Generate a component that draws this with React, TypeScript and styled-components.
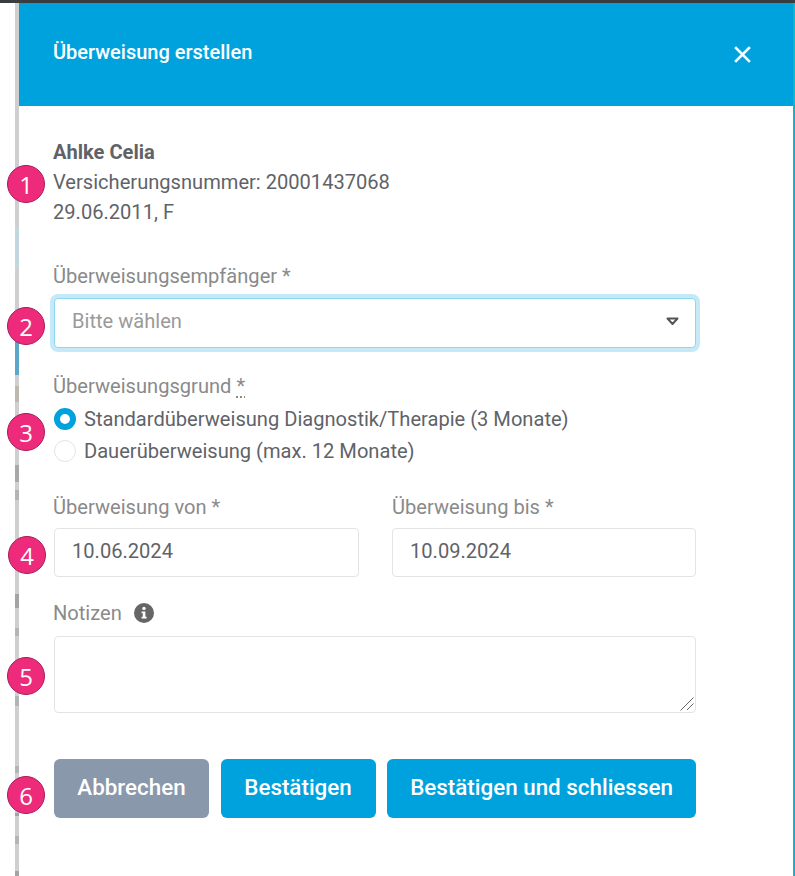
import React from 'react';
import styled, {createGlobalStyle} from 'styled-components';

const GlobalStyle = createGlobalStyle`
  html, body {
    margin: 0;
    padding: 0;
    background: #fff;
  }
  * {
    box-sizing: border-box;
  }
`;

const badges = [
    {label: '1', top: 165, left: 7},
    {label: '2', top: 307, left: 7},
    {label: '3', top: 413, left: 7},
    {label: '4', top: 536, left: 8},
    {label: '5', top: 657, left: 7},
    {label: '6', top: 776, left: 7},
];

// what shows of the page behind the panel
const GRAY = '#cfcfcf';
const MARK = '#b4b4b4';
const strips = [
    {height: 225, color: GRAY},
    {height: 40, color: '#c3d6e0'},
    {height: 62, color: GRAY},
    {height: 45, color: '#5ba6c9'},
    {height: 11, color: GRAY},
    {height: 16, color: '#bdb8ae'},
    {height: 63, color: GRAY},
    {height: 17, color: '#a8a8a8'},
    {height: 8, color: GRAY},
    {height: 10, color: MARK},
    {height: 94, color: GRAY},
    {height: 14, color: '#a4a4a4'},
    {height: 20, color: GRAY},
    {height: 8, color: MARK},
    {height: 60, color: GRAY},
    {height: 10, color: MARK},
    {height: 60, color: GRAY},
    {height: 7, color: MARK},
    {height: 40, color: GRAY},
    {height: 3, color: '#a4a4a4'},
    {height: 20, color: GRAY},
    {height: 8, color: MARK},
    {height: 27, color: GRAY},
    {height: 5, color: '#a4a4a4'},
];

function App() {
    return (
        <Page>
            <GlobalStyle/>
            <Gutter>
                {strips.map((strip, index) => (
                    <Strip key={index} $height={strip.height} $color={strip.color}/>
                ))}
            </Gutter>
            <Panel>
                <Header>
                    <Title>Überweisung erstellen</Title>
                    <CloseIcon viewBox="0 0 18 18" aria-label="Schliessen">
                        <path d="M2 2 L16 16 M16 2 L2 16" stroke="#fff" strokeWidth="2.6" fill="none"/>
                    </CloseIcon>
                </Header>
                <Body>
                    <Patient>
                        <PatientName>Ahlke Celia</PatientName>
                        <div>Versicherungsnummer: 20001437068</div>
                        <div>29.06.2011, F</div>
                    </Patient>

                    <RecipientLabel>Überweisungsempfänger *</RecipientLabel>
                    <SelectBox>
                        <Placeholder>Bitte wählen</Placeholder>
                        <svg width="13" height="9" viewBox="0 0 13 9">
                            <path d="M1.5 1.5 H11.5 L6.5 7 Z" fill="#fff" stroke="#555" strokeWidth="2" strokeLinejoin="round"/>
                        </svg>
                    </SelectBox>

                    <ReasonLabel>Überweisungsgrund <Required title="Pflichtfeld">*</Required></ReasonLabel>
                    <RadioGroup>
                        <RadioRow>
                            <Radio $checked/>
                            Standardüberweisung Diagnostik/Therapie (3 Monate)
                        </RadioRow>
                        <RadioRow>
                            <Radio/>
                            Dauerüberweisung (max. 12 Monate)
                        </RadioRow>
                    </RadioGroup>

                    <DateRow>
                        <div>
                            <DateLabel>Überweisung von *</DateLabel>
                            <Input type={'text'} defaultValue={'10.06.2024'}/>
                        </div>
                        <div>
                            <DateLabel $flush>Überweisung bis *</DateLabel>
                            <Input type={'text'} defaultValue={'10.09.2024'}/>
                        </div>
                    </DateRow>

                    <NotesLabel>
                        Notizen
                        <InfoIcon viewBox="0 0 20 20">
                            <circle cx="10" cy="10" r="10" fill="#666"/>
                            <circle cx="10" cy="5.4" r="1.7" fill="#fff"/>
                            <path d="M7.6 8.4 H11.4 V13.8 H12.6 V15.6 H7.6 V13.8 H8.8 V10.2 H7.6 Z" fill="#fff"/>
                        </InfoIcon>
                    </NotesLabel>
                    <NotesBox>
                        <Notes/>
                        <Grip viewBox="0 0 14 14">
                            <path d="M0.5 13.5 L13.5 0.5 M7 13 L13.5 6.5" stroke="#666" strokeWidth="1" fill="none"/>
                        </Grip>
                    </NotesBox>

                    <Buttons>
                        <Button $width={155} $color={'#8a98ab'}>Abbrechen</Button>
                        <Button $width={155}>Bestätigen</Button>
                        <Button $width={309}>Bestätigen und schliessen</Button>
                    </Buttons>
                </Body>
            </Panel>
            {badges.map((badge) => (
                <Badge key={badge.label} $top={badge.top} $left={badge.left}>{badge.label}</Badge>
            ))}
        </Page>
    )
}

const Page = styled.div`
  position: relative;
  display: flex;
  width: 795px;
  height: 876px;
  overflow: hidden;
  background: #fff;
  border-top: 3px solid #3a3d40;
  font-family: Roboto, "Liberation Sans", sans-serif;
  font-size: 20.1px;
  color: #5f6368;
`;
const Gutter = styled.div`
  flex: none;
  width: 19px;
  padding-left: 15px;
  background: #fff;
`;
const Strip = styled.div<{$height: number, $color: string}>`
  height: ${(p) => p.$height}px;
  background: ${(p) => p.$color};
`;
const Panel = styled.div`
  flex: 1;
  border-right: 2px solid #10b5c8;
`;
const Header = styled.div`
  display: flex;
  align-items: center;
  justify-content: space-between;
  height: 103px;
  padding: 0 41px 0 34px;
  background: #00a2de;
`;
const Title = styled.div`
  margin-bottom: 5px;
  color: #fff;
  font-size: 20px;
  font-weight: 500;
`;
const CloseIcon = styled.svg`
  width: 19px;
  height: 19px;
`;
const Body = styled.div`
  padding: 31px 0 0 35px;
  width: 677px;
`;
const Patient = styled.div`
  margin-left: -1px;
  line-height: 30px;
`;
const PatientName = styled.div`
  font-weight: 700;
`;
const Label = styled.div`
  height: 24px;
  margin-left: -1px;
  line-height: 24px;
  color: #8a8a8a;
`;
const RecipientLabel = styled(Label)`
  margin-top: 37px;
`;
const SelectBox = styled.div`
  display: flex;
  align-items: center;
  justify-content: space-between;
  height: 50px;
  margin-top: 10px;
  padding: 0 16px 4px 17px;
  background: #fff;
  border: 1px solid #8fd6f0;
  border-radius: 4px;
  box-shadow: 0 0 0 4px #c6e9f7;
`;
const Placeholder = styled.span`
  color: #9a9a9a;
`;
const ReasonLabel = styled(Label)`
  margin-top: 26px;
`;
const Required = styled.abbr`
  text-decoration: underline dotted;
  text-underline-offset: 3px;
`;
const RadioGroup = styled.div`
  margin-top: 5px;
`;
const RadioRow = styled.label`
  display: flex;
  align-items: center;
  gap: 8px;
  height: 32px;
`;
const Radio = styled.span<{$checked?: boolean}>`
  flex: none;
  width: 22px;
  height: 22px;
  border-radius: 50%;
  background: #fff;
  border: ${(p) => p.$checked ? '6px solid #00a2de' : '1px solid #e4e4e4'};
`;
const DateRow = styled.div`
  display: grid;
  grid-template-columns: 305px 304px;
  gap: 33px;
  margin-top: 28px;
`;
const DateLabel = styled(Label)<{$flush?: boolean}>`
  margin-left: ${(p) => p.$flush ? '0' : '-1px'};
  margin-bottom: 9px;
`;
const Input = styled.input`
  display: block;
  width: 100%;
  height: 49px;
  padding: 0 17px 4px;
  border: 1px solid #e4e4e4;
  border-radius: 4px;
  outline: none;
  background: #fff;
  color: #5f6368;
  font-family: inherit;
  font-size: 20.1px;
`;
const NotesLabel = styled(Label)`
  display: flex;
  align-items: center;
  gap: 12px;
  margin-top: 24px;
`;
const InfoIcon = styled.svg`
  width: 20px;
  height: 20px;
`;
const NotesBox = styled.div`
  position: relative;
  margin-top: 11px;
`;
const Notes = styled.textarea`
  display: block;
  width: 642px;
  height: 77px;
  border: 1px solid #e4e4e4;
  border-radius: 4px;
  outline: none;
  resize: none;
  background: #fff;
`;
const Grip = styled.svg`
  position: absolute;
  right: 2px;
  bottom: 2px;
  width: 14px;
  height: 14px;
`;
const Buttons = styled.div`
  display: flex;
  gap: 11.5px;
  margin-top: 46px;
`;
const Button = styled.button<{$width: number, $color?: string}>`
  width: ${(p) => p.$width}px;
  height: 59px;
  padding: 0 0 4px;
  border: none;
  border-radius: 6px;
  background: ${(p) => p.$color || '#00a2de'};
  color: #fff;
  font-family: inherit;
  font-size: 22.4px;
  font-weight: 500;
`;
const Badge = styled.div<{$top: number, $left: number}>`
  position: absolute;
  top: ${(p) => p.$top - 3}px;
  left: ${(p) => p.$left}px;
  display: flex;
  align-items: center;
  justify-content: center;
  width: 38px;
  height: 38px;
  border: 1px solid #a51d5a;
  border-radius: 50%;
  background: #ee2a7b;
  color: #fff;
  font-family: "Open Sans", sans-serif;
  font-size: 24px;
`;

export default App;
